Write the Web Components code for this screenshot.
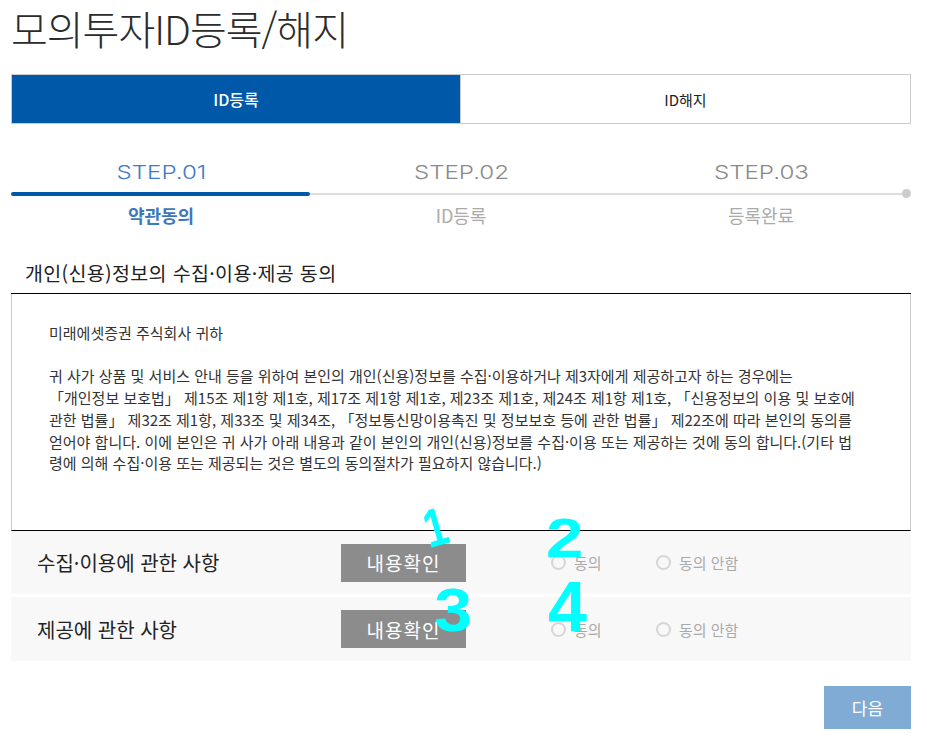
<!DOCTYPE html>
<html lang="ko">
<head>
<meta charset="UTF-8">
<title>모의투자ID등록/해지</title>
<style>
  html, body { margin: 0; background: #fff; }
  body { font-family: "Noto Sans CJK KR", "Liberation Sans", sans-serif; color: #333; }
</style>
</head>
<body>
<template id="page-shell-template">
  <style>
    :host { display: block; position: relative; width: 900px; height: 745px; margin-left: 11px; overflow: visible; }
  </style>
  <slot></slot>
</template>

<template id="page-title-template">
  <style>
    :host { display: block; height: 74px; }
    h1 { margin: 0; font-size: 40px; line-height: 56px; font-weight: 300; letter-spacing: -1px; color: #2b2b2b; white-space: nowrap; }
  </style>
  <h1><slot></slot></h1>
</template>

<template id="tab-bar-template">
  <style>
    :host { display: flex; height: 50px; }
  </style>
  <slot></slot>
</template>

<template id="tab-item-template">
  <style>
    :host { flex: 1 1 0; display: flex; align-items: center; justify-content: center; box-sizing: border-box; border: 1px solid #ccc; background: #fff; color: #222; font-size: 15px; }
    :host([active]) { flex: 0 0 450px; background: #0059a8; color: #fff; font-size: 16px; font-weight: 500; }
    :host(:not([active])) { border-left: 0; }
  </style>
  <slot></slot>
</template>

<template id="step-track-template">
  <style>
    :host { display: block; position: relative; margin-top: 37px; height: 80px; }
    .items { display: grid; grid-template-columns: 300px 300px 300px; }
    .line { position: absolute; left: 0; top: 32px; width: 895px; height: 2px; background: #ddd; }
    .done { position: absolute; left: 0; top: 31px; width: 299px; height: 4px; background: #0059a8; border-radius: 2px; }
    .dot { position: absolute; left: 891px; top: 28px; width: 9px; height: 9px; border-radius: 50%; background: #ccc; }
  </style>
  <div class="line"></div>
  <div class="done"></div>
  <div class="dot"></div>
  <div class="items"><slot></slot></div>
</template>

<template id="step-item-template">
  <style>
    :host { display: block; text-align: center; color: #aaa; }
    .num { height: 32px; line-height: 24px; color: #8a8a8a; font-family: "Inter", "Liberation Sans", sans-serif; font-weight: 300; font-size: 19px; }
    .num span { display: inline-block; transform: scaleX(1.27); }
    .label { margin-top: 9px; font-size: 18px; line-height: 26px; letter-spacing: -0.1px; }
    :host([active]) .num { color: #3d7cc4; }
    :host([active]) .label { color: #3d78bd; font-weight: 700; }
  </style>
  <div class="num"><span><slot name="num"></slot></span></div>
  <div class="label"><slot></slot></div>
</template>

<template id="consent-box-template">
  <style>
    :host { display: block; margin-top: 10px; }
    h2 { margin: 0; height: 43px; padding-left: 14px; font-size: 19.5px; line-height: 43px; font-weight: 400; letter-spacing: .35px; color: #222; box-sizing: border-box; border-bottom: 1px solid #000; white-space: nowrap; }
    .body { box-sizing: border-box; height: 237px; padding: 28px 0 0 37px; border-left: 1px solid #ccc; border-right: 1px solid #ccc; border-bottom: 1px solid #000; font-size: 15px; line-height: 21.7px; color: #333; white-space: nowrap; }
  </style>
  <h2><slot name="title"></slot></h2>
  <div class="body"><slot></slot></div>
</template>

<template id="agree-row-template">
  <style>
    :host { display: grid; grid-template-columns: 330px 210px 105px 1fr; align-items: center; height: 63px; background: #f8f8f8; margin-bottom: 3px; }
    :host(:last-of-type) { height: 64px; }
    .name { padding-left: 26px; font-size: 20px; color: #222; white-space: nowrap; }
    button { display: block; width: 125px; height: 38px; border: 0; padding: 0; background: #8c8c8c; color: #fff; font: inherit; font-size: 19px; letter-spacing: 1px; }
  </style>
  <div class="name"><slot name="name"></slot></div>
  <div><button type="button">내용확인</button></div>
  <slot></slot>
</template>

<template id="radio-option-template">
  <style>
    :host { display: flex; align-items: center; gap: 8px; font-size: 15px; color: #aaa; white-space: nowrap; }
    i { box-sizing: border-box; width: 15px; height: 15px; border: 2px solid #d6d6d6; border-radius: 50%; background: #f8f8f8; }
  </style>
  <i></i><slot></slot>
</template>

<template id="next-bar-template">
  <style>
    :host { display: flex; justify-content: flex-end; margin-top: 25px; }
    button { width: 87px; height: 43px; border: 0; padding: 0; background: #80abd4; color: #fff; font: inherit; font-size: 17px; }
  </style>
  <button type="button"><slot></slot></button>
</template>

<template id="pen-mark-template">
  <style>
    :host { position: absolute; display: block; left: var(--x); top: var(--y); color: #00ffff; font-family: "Liberation Sans", sans-serif; font-weight: 700; font-size: var(--size, 44px); line-height: 1; transform: var(--tf, none); }
  </style>
  <slot></slot>
</template>

<page-shell>
  <page-title>모의투자ID등록/해지</page-title>
  <tab-bar>
    <tab-item active>ID등록</tab-item>
    <tab-item>ID해지</tab-item>
  </tab-bar>
  <step-track>
    <step-item active><span slot="num">STEP.01</span>약관동의</step-item>
    <step-item><span slot="num">STEP.02</span>ID등록</step-item>
    <step-item><span slot="num">STEP.03</span>등록완료</step-item>
  </step-track>
  <consent-box>
    <span slot="title">개인(신용)정보의 수집·이용·제공 동의</span>
    미래에셋증권 주식회사 귀하<br><br>
    귀 사가 상품 및 서비스 안내 등을 위하여 본인의 개인(신용)정보를 수집·이용하거나 제3자에게 제공하고자 하는 경우에는<br>
    「개인정보 보호법」 제15조 제1항 제1호, 제17조 제1항 제1호, 제23조 제1호, 제24조 제1항 제1호, 「신용정보의 이용 및 보호에<br>
    관한 법률」 제32조 제1항, 제33조 및 제34조, 「정보통신망이용촉진 및 정보보호 등에 관한 법률」 제22조에 따라 본인의 동의를<br>
    얻어야 합니다. 이에 본인은 귀 사가 아래 내용과 같이 본인의 개인(신용)정보를 수집·이용 또는 제공하는 것에 동의 합니다.(기타 법<br>
    령에 의해 수집·이용 또는 제공되는 것은 별도의 동의절차가 필요하지 않습니다.)
  </consent-box>
  <agree-row>
    <span slot="name">수집·이용에 관한 사항</span>
    <radio-option>동의</radio-option>
    <radio-option>동의 안함</radio-option>
  </agree-row>
  <agree-row>
    <span slot="name">제공에 관한 사항</span>
    <radio-option>동의</radio-option>
    <radio-option>동의 안함</radio-option>
  </agree-row>
  <next-bar>다음</next-bar>
  <pen-mark style="--x:409px;--y:500px;--size:54px;--tf:rotate(-16deg) scaleX(.75)">1</pen-mark>
  <pen-mark style="--x:538px;--y:510px;--size:56px;--tf:scaleX(1.2)">2</pen-mark>
  <pen-mark style="--x:425px;--y:579px;--size:62px;--tf:scaleX(1.1)">3</pen-mark>
  <pen-mark style="--x:537px;--y:572px;--size:70px">4</pen-mark>
</page-shell>

<script>
  function plain (tag) {
    customElements.define(tag, class extends HTMLElement {
      constructor () {
        super();
        const tpl = document.getElementById(tag + "-template").content;
        this.attachShadow({ mode: "open" }).appendChild(tpl.cloneNode(true));
      }
    });
  }
  ["page-shell", "page-title", "tab-bar", "tab-item", "step-track", "step-item",
   "consent-box", "agree-row", "radio-option", "next-bar", "pen-mark"].forEach(plain);
</script>
</body>
</html>
